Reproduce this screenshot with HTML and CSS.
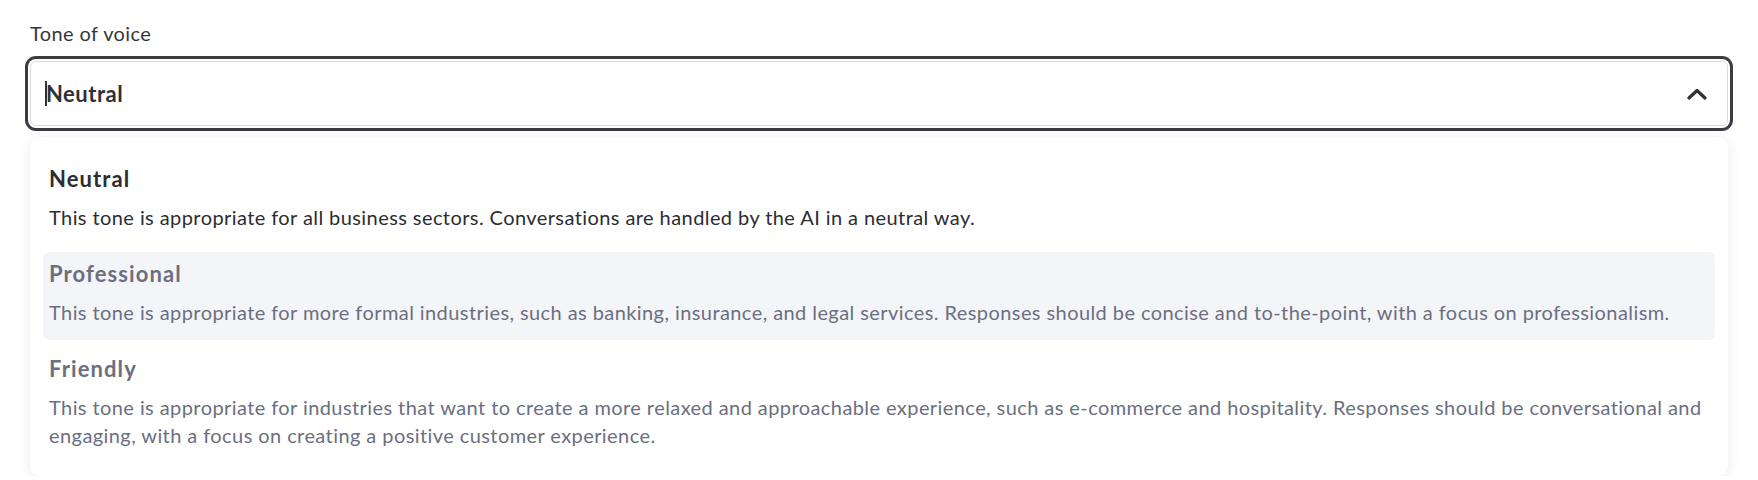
FILE: index.html
```html
<!DOCTYPE html>
<html lang="en">
<head>
<meta charset="utf-8">
<title>Tone of voice</title>
<link rel="stylesheet" href="styles.css">
</head>
<body>
<div class="field">
  <label class="field-label">Tone of voice</label>
  <div class="select">
    <div class="select-value"><span class="caret"></span>Neutral</div>
    <svg class="chevron" width="20" height="12" viewBox="0 0 20 12" aria-hidden="true">
      <polyline points="2,10 10,2.5 18,10" fill="none" stroke="#2f3137" stroke-width="3.2" stroke-linecap="round" stroke-linejoin="round"/>
    </svg>
  </div>
  <ul class="menu">
    <li class="option option-selected">
      <div class="option-title">Neutral</div>
      <div class="option-desc">This tone is appropriate for all business sectors. Conversations are handled by the AI in a neutral way.</div>
    </li>
    <li class="option option-active">
      <div class="option-title">Professional</div>
      <div class="option-desc">This tone is appropriate for more formal industries, such as banking, insurance, and legal services. Responses should be concise and to-the-point, with a focus on professionalism.</div>
    </li>
    <li class="option">
      <div class="option-title">Friendly</div>
      <div class="option-desc">This tone is appropriate for industries that want to create a more relaxed and approachable experience, such as e-commerce and hospitality. Responses should be conversational and engaging, with a focus on creating a positive customer experience.</div>
    </li>
  </ul>
</div>
</body>
</html>
```

FILE: styles.css
```css
* {
  box-sizing: border-box;
}

html, body {
  margin: 0;
  padding: 0;
  background: #ffffff;
}

body {
  font-family: "Lato", "Liberation Sans", sans-serif;
  color: #2d2f35;
}

.field {
  padding: 21px 30px 0;
}

.field-label {
  display: block;
  font-size: 20px;
  letter-spacing: 0.4px;
  line-height: 24px;
  color: #35373d;
  margin-bottom: 16px;
}

.select {
  height: 65px;
  border: 1px solid #d8dae0;
  border-radius: 6px;
  box-shadow: 0 0 0 2px #ffffff, 0 0 0 5px #3a3c42;
  display: flex;
  align-items: center;
  justify-content: space-between;
  padding: 0 20px 0 14px;
  background: #fff;
}

.select-value {
  display: flex;
  align-items: center;
  font-size: 22px;
  font-weight: 700;
  letter-spacing: 0.5px;
  color: #2f3137;
}

.caret {
  display: inline-block;
  width: 2px;
  height: 25px;
  background: #2f3137;
  margin-right: -1px;
}

.chevron {
  display: block;
}

.menu {
  list-style: none;
  margin: 11px 0 0;
  padding: 20px 13px 13px;
  background: #fff;
  border-radius: 10px;
  box-shadow: 0 2px 14px rgba(17, 24, 39, 0.08);
  display: flex;
  flex-direction: column;
  gap: 7px;
}

.option {
  padding: 8px 6px 14px;
  border-radius: 6px;
  color: #6b6f7f;
}

.option-title {
  font-size: 22px;
  font-weight: 700;
  letter-spacing: 1.1px;
  line-height: 28px;
  margin-bottom: 10px;
}

.option-desc {
  font-size: 20px;
  letter-spacing: 0.42px;
  line-height: 28px;
}

.option-selected {
  color: #2b2d33;
}

.option-active {
  background: #f4f5f9;
}
```
